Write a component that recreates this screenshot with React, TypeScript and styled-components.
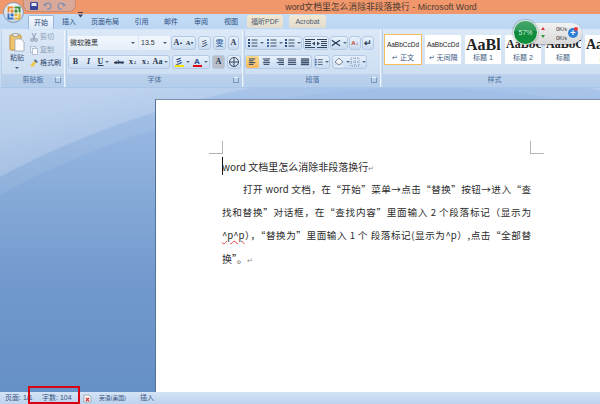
import React from "react";
import styled, { createGlobalStyle } from "styled-components";

const Global = createGlobalStyle`
  html, body { margin: 0; padding: 0; width: 600px; height: 404px; overflow: hidden; }
  body { font-family: "Liberation Sans", "Noto Sans CJK SC", sans-serif; }
  * { box-sizing: border-box; }
`;
const cjk = `"Liberation Sans", "Noto Sans CJK SC", sans-serif`;

const Window = styled.div`
  position: relative; width: 600px; height: 404px; display: flex; flex-direction: column; overflow: hidden;
  background: #6b94c9;
`;
const TitleBar = styled.div`
  height: 14px; background: #f1976c; display: flex; align-items: center; justify-content: center;
  padding-left: 162px; flex: none;
  font: 8.8px ${cjk}; color: #4c3a30; white-space: nowrap; line-height: 14px;
`;
const Tabs = styled.div`
  height: 15px; flex: none; background: linear-gradient(#c3dcf6, #bcd6f3); display: flex; padding-left: 28px; align-items: flex-end;
`;
const Tab = styled.div<{ $w: number; $active?: boolean }>`
  width: ${p => p.$w}px; height: 14px; font: 7px/14px ${cjk}; text-align: center; color: #2d4f80; flex: none;
  ${p => p.$active && `background: linear-gradient(#f6fafe, #dae8f7); color: #2a4a78; border: 1px solid #9db9dc; border-bottom: 0; border-radius: 2px 2px 0 0; line-height: 13px;`}
`;
const AddinTab = styled.div<{ $w: number; $ml: number }>`
  width: ${p => p.$w}px; margin-left: ${p => p.$ml}px; height: 13px; margin-bottom: 1px; flex: none; font: 7px/13px ${cjk}; text-align: center; color: #4a5a72;
  background: linear-gradient(#f3e9d3, #dfdcd0); border-radius: 2px 2px 0 0;
`;
const Ribbon = styled.div`
  height: 59px; flex: none; display: flex; gap: 1px; padding: 1px 0 0 1px;
  background: linear-gradient(#d7e6f7, #c6daf1);
  border-bottom: 1px solid #a9c6e8;
`;
const Group = styled.div<{ $w: number }>`
  width: ${p => p.$w}px; flex: none; display: flex; flex-direction: column; position: relative;
  background: linear-gradient(#dbe8f7, #cbdcf1); border-right: 1px solid #eef5fc; border-left: 1px solid #b9d0ea;
`;
const GroupBody = styled.div`
  flex: 1; display: flex; min-height: 0;
`;
const GroupLabel = styled.div`
  height: 13px; flex: none; background: linear-gradient(#bcd2ec, #b4cdea); font: 7px/12px ${cjk}; text-align: center; color: #4a6d9e; position: relative;
`;
const Launcher = styled.span`
  position: absolute; right: 3px; top: 3px; width: 6px; height: 6px; border: 1px solid #7d97b8; border-top-color: #eaf2fb; border-left-color: #7d97b8;
`;
const PasteCol = styled.div`
  width: 28px; flex: none; display: flex; flex-direction: column; align-items: center; padding: 3px 0 0 2px;
  font: 7px/9px ${cjk}; color: #2f4a72;
`;
const PasteLabel = styled.span`margin-top: 1px;`;
const Caret = styled.span`
  display: block; width: 0; height: 0; border: 2px solid transparent; border-top: 2.5px solid #3f5a80; border-bottom: 0; flex: none;
`;
const PasteCaret = styled(Caret)`margin-top: 5px;`;
const ClipCol = styled.div`
  flex: 1; display: flex; flex-direction: column; padding-top: 2px; gap: 3px;
`;
const ClipItem = styled.div<{ $off?: boolean }>`
  height: 10px; display: flex; align-items: center; gap: 2px; font: 7px/10px ${cjk}; color: ${p => p.$off ? "#8b9db3" : "#2f4a72"};
  white-space: nowrap;
`;
const FontRows = styled.div<{ $pl: number }>`
  flex: 1; display: flex; flex-direction: column; gap: 5px; padding: 6px 0 0 ${p => p.$pl}px;
`;
const ToolRow = styled.div<{ $gap?: number }>`
  display: flex; align-items: center; gap: ${p => p.$gap ?? 2}px; height: 14px;
`;
const Combo = styled.div<{ $w: number }>`
  width: ${p => p.$w}px; height: 14px; flex: none; background: linear-gradient(#f2f7fd, #e5eef9); display: flex; align-items: center; justify-content: space-between;
  padding: 0 3px 0 2px; font: 7px/14px ${cjk}; color: #333; margin-right: -1px;
`;
const ToolGroup = styled.div`
  display: flex; align-items: center; height: 14px; flex: none; border: 1px solid #b4cae4; border-radius: 3px;
  background: linear-gradient(#e8f1fb, #c9dbf1);
`;
const Tool = styled.div<{ $w?: number; $on?: boolean; $shade?: boolean }>`
  width: ${p => p.$w ?? 13}px; height: 12px; flex: none; display: flex; align-items: center; justify-content: center; gap: 1px;
  font: bold 8px/12px "Liberation Serif", serif; color: #27374f;
  ${p => p.$on && `background: linear-gradient(#fbd98f, #f6b95e); border-radius: 2px;`}
  ${p => p.$shade && `background: #b9bfc8;`}
`;
const SmallTool = styled(Tool)`font-size: 6.5px;`;
const GlyphTool = styled(Tool)<{ $blue?: boolean }>`
  font: 8px/12px "Noto Sans CJK SC", sans-serif; color: ${p => p.$blue ? "#2a5a9a" : "#27374f"};
`;
const ItalicTool = styled(Tool)`font-style: italic;`;
const SortTool = styled(Tool)`font: bold 6px/6px "Liberation Sans", sans-serif; color: #c0392b;`;
const MarkTool = styled(Tool)`font: bold 9px/12px "Liberation Sans", sans-serif;`;
const Tiny = styled.span`font-size: 4px;`;
const TextSwatch = styled.span<{ $c: string }>`
  display: inline-block; line-height: 8px; border-bottom: 2px solid ${p => p.$c}; font: bold 8px/7px "Liberation Sans", "Noto Sans CJK SC", sans-serif; color: #2a4a8a; width: 9px; text-align: center;
`;
const Gallery = styled.div`
  flex: 1; display: flex; gap: 4px; padding: 5px 0 0 2px; overflow: hidden;
`;
const StyleCard = styled.div<{ $sel?: boolean }>`
  width: 36px; height: 29px; flex: none; background: #fff; display: flex; flex-direction: column; align-items: center; overflow: hidden;
  ${p => p.$sel ? `outline: 1.5px solid #f5bd5c;` : ``}
`;
const Sample = styled.div<{ $size?: number }>`
  height: 18px; width: 100%; white-space: nowrap; overflow: hidden; text-align: ${p => p.$size ? "left" : "center"}; padding-left: ${p => p.$size ? 1 : 0}px;
  font: ${p => p.$size ? `bold ${p.$size}px/19px "Liberation Serif", serif` : `6.5px/19px "Liberation Sans", sans-serif`};
  color: #222;
`;
const StyleName = styled.div`
  height: 10px; font: 7px/9px ${cjk}; color: #3d5b85; white-space: nowrap;
`;
const Workspace = styled.div`
  flex: 1; min-height: 0; padding: 11px 0 0 155px; display: flex;
  background:
    radial-gradient(circle 930px at 420px 879px, rgba(255,255,255,0) 878px, rgba(255,255,255,.07) 880px, rgba(255,255,255,.07) 894px, rgba(255,255,255,.24) 896px, rgba(255,255,255,.3) 930px),
    linear-gradient(#a2c0e8, #8aadda 30%, #7199cd 65%, #6590c6);
`;
const Page = styled.div`
  flex: 1; background: #fff; position: relative; border-left: 1px solid #52729c; border-top: 1px solid #7e8ea6;
  padding: 55px 69px 0 66px; display: flex; flex-direction: column;
  font: 10px/23px "Noto Sans CJK SC", "Liberation Sans", sans-serif; color: #2b2b2b;
`;
const Mark = styled.span<{ $side: "l" | "r" }>`
  position: absolute; top: 41px; width: 14px; height: 13px; border-bottom: 1px solid #b5b5b5;
  ${p => p.$side === "l" ? `left: 53px; border-right: 1px solid #b5b5b5;` : `left: 374px; border-left: 1px solid #b5b5b5;`}
`;
const Cursor = styled.span`
  position: absolute; left: 66px; top: 57px; width: 1px; height: 18px; background: #111;
`;
const DocLine = styled.div<{ $indent?: boolean; $just?: boolean }>`
  height: 23px; white-space: nowrap; ${p => p.$indent && "padding-left: 21px;"}
  ${p => p.$just && "font-size: 9.6px; white-space: normal; text-align: justify; text-align-last: justify;"}
`;
const PMark = styled.span`
  color: #8a8a8a; font-size: 7px;
`;
const Wavy = styled.span`
  text-decoration: underline wavy #e04040 1px; text-underline-offset: 1px;
`;
const StatusBar = styled.div`
  height: 12px; flex: none; background: linear-gradient(#d5e4f6, #bdd3ee); display: flex; align-items: center; padding-left: 5px;
  font: 7px/12px ${cjk}; color: #39557e;
`;
const StatusItem = styled.span<{ $w: number; $small?: boolean }>`
  width: ${p => p.$w}px; flex: none; white-space: nowrap; display: flex; align-items: center;
  ${p => p.$small && "font-size: 5.8px;"}
`;
const RedBox = styled.div`
  position: absolute; left: 28px; top: 386px; width: 52px; height: 18px; border: 2px solid #d9000f;
`;
const Orb = styled.div`
  position: absolute; left: 3px; top: 2px; width: 21px; height: 21px; border-radius: 50%;
  background: radial-gradient(circle at 50% 30%, #fff, #cfdcec 70%, #8fa3bd);
  border: 1px solid #8b9cb2; display: flex; align-items: center; justify-content: center;
`;
const Qat = styled.div`
  position: absolute; left: 23px; top: 0; width: 53px; height: 12px; background: rgba(190,190,210,.45); border: 1px solid #c98a70; border-top: 0;
  border-radius: 0 0 7px 7px; display: flex; align-items: center; gap: 5px; padding-left: 6px;
`;
const QatMore = styled.div`
  position: absolute; left: 78px; top: 4px;
`;
const Meter = styled.div`
  position: absolute; left: 525px; top: 23px; width: 57px; height: 21px; border-radius: 11px; background: linear-gradient(#f2f2f2, #d9d9d9);
  box-shadow: 0 1px 2px rgba(0,0,0,.35); display: flex; flex-direction: column; align-items: flex-end; padding: 2px 15px 0 0;
  font: 5.5px/9px "Liberation Sans", sans-serif; color: #333;
`;
const MeterDial = styled.div`
  position: absolute; left: 513px; top: 20px; width: 25px; height: 25px; border-radius: 50%;
  background: linear-gradient(#46a86a 0, #2f9a5a 42%, #0f8a3a 45%, #12903e); border: 1px solid #d8e8dc;
  box-shadow: 0 0 2px rgba(0,0,0,.5);
  font: 7px/23px "Liberation Sans", sans-serif; color: #cfeedd; text-align: center;
`;
const MeterPlus = styled.div`
  position: absolute; left: 568px; top: 28px; width: 10px; height: 10px; border-radius: 50%; background: #2f7fd8; color: #fff;
  font: bold 9px/10px "Liberation Sans", sans-serif; text-align: center;
`;
const MeterDot = styled.div`
  position: absolute; left: 574px; top: 27px; width: 4px; height: 4px; border-radius: 50%; background: #e23b3b;
`;
const Arrow = styled.span<{ $c: string; $up?: boolean }>`
  position: absolute; left: 541px; top: ${p => p.$up ? 27 : 35}px; width: 0; height: 0;
  border: 2px solid transparent;
  ${p => p.$up ? `border-bottom: 3px solid ${p.$c}; border-top: 0;` : `border-top: 3px solid ${p.$c}; border-bottom: 0;`}
`;

const Lines = ({ kind }: { kind: "l" | "c" | "r" | "j" | "d" }) => {
  const rows: [number, number][] = kind === "l" ? [[1, 7], [1, 5], [1, 7], [1, 5]]
    : kind === "c" ? [[2, 8], [3, 6], [2, 8], [3, 6]]
    : kind === "r" ? [[3, 8], [5, 6], [3, 8], [5, 6]]
    : [[1, 9], [1, 9], [1, 9], [1, 9]];
  return (
    <svg width="10" height="9" viewBox="0 0 11 9">
      {rows.map(([x, w], i) => <rect key={i} x={x} y={i * 2} width={w} height={1.2} fill="#3c4f6b" />)}
      {kind === "d" && <rect x="1" y="0" width="9" height="8" fill="#3c4f6b" opacity=".35" />}
    </svg>
  );
};
const ListIcon = ({ n }: { n?: boolean }) => (
  <svg width="10" height="9" viewBox="0 0 10 9">
    {[1, 4, 7].map(y => <g key={y}><rect x="0" y={y - 1} width="2" height="2" fill={n ? "#3f6aa8" : "#2f4f80"} /><rect x="3.5" y={y - .5} width="6" height="1" fill="#3c4f6b" /></g>)}
  </svg>
);
const IndentIcon = ({ flip }: { flip?: boolean }) => (
  <svg width="10" height="9" viewBox="0 0 10 9">
    <g transform={flip ? "translate(10 0) scale(-1 1)" : undefined}>
      {[0, 2, 4, 6, 8].map(y => <rect key={y} x={y === 0 || y === 8 ? 0 : 4} y={y} width={y === 0 || y === 8 ? 10 : 6} height="1" fill="#33465f" />)}
      <path d="M0 2.5 L3 4.5 L0 6.5Z" fill="#33465f" />
    </g>
  </svg>
);
const Mini = styled(Caret)`margin-left: 1px; border-top-color: #55708f;`;

export default function App() {
  return (
    <Window>
      <Global />
      <TitleBar>word文档里怎么消除非段落换行 - Microsoft Word</TitleBar>
      <Tabs>
        <Tab $w={26} $active>开始</Tab>
        <Tab $w={30}>插入</Tab>
        <Tab $w={42}>页面布局</Tab>
        <Tab $w={31}>引用</Tab>
        <Tab $w={28}>邮件</Tab>
        <Tab $w={32}>审阅</Tab>
        <Tab $w={28}>视图</Tab>
        <AddinTab $w={36} $ml={2}>福昕PDF</AddinTab>
        <AddinTab $w={37} $ml={6}>Acrobat</AddinTab>
      </Tabs>
      <Ribbon>
        <Group $w={64}>
          <GroupBody>
            <PasteCol>
              <svg width="16" height="19" viewBox="0 0 16 19">
                <rect x="1" y="2" width="11" height="15" rx="1" fill="#f0c46a" stroke="#b98f3e" />
                <rect x="4" y="0.5" width="5" height="3" fill="#e8e8e8" stroke="#8a8a8a" strokeWidth=".6" />
                <path d="M6 6h6l3 3v9H6z" fill="#fdfdfd" stroke="#97a5b5" strokeWidth=".8" />
              </svg>
              <PasteLabel>粘贴</PasteLabel>
              <PasteCaret />
            </PasteCol>
            <ClipCol>
              <ClipItem $off>
                <svg width="8" height="9" viewBox="0 0 8 9"><path d="M2 0l3 6M6 0L3 6" stroke="#8b9db3" fill="none" /><circle cx="2" cy="7" r="1.4" fill="none" stroke="#8b9db3" /><circle cx="6" cy="7" r="1.4" fill="none" stroke="#8b9db3" /></svg>
                剪切
              </ClipItem>
              <ClipItem $off>
                <svg width="8" height="9" viewBox="0 0 8 9"><rect x="0.5" y="0.5" width="5" height="6" fill="#eef3f9" stroke="#9fb0c4" strokeWidth=".7" /><rect x="2.5" y="2.5" width="5" height="6" fill="#f8fafc" stroke="#9fb0c4" strokeWidth=".7" /></svg>
                复制
              </ClipItem>
              <ClipItem>
                <svg width="8" height="9" viewBox="0 0 8 9"><path d="M5 0l3 3-2 1-2-2z" fill="#5a6c88" /><path d="M4 2l2 2-3 4-3-1z" fill="#f0c84a" /></svg>
                格式刷
              </ClipItem>
            </ClipCol>
          </GroupBody>
          <GroupLabel>剪贴板<Launcher /></GroupLabel>
        </Group>
        <Group $w={177}>
          <GroupBody>
            <FontRows $pl={1}>
              <ToolRow>
                <Combo $w={70}>微软雅黑<Caret /></Combo>
                <Combo $w={31}>13.5<Caret /></Combo>
                <ToolGroup>
                  <Tool $w={12}>A<Tiny>▴</Tiny></Tool>
                  <SmallTool $w={11}>A<Tiny>▾</Tiny></SmallTool>
                </ToolGroup>
                <ToolGroup><GlyphTool $w={11}>彡</GlyphTool></ToolGroup>
                <ToolGroup><GlyphTool $w={11} $blue>雯</GlyphTool></ToolGroup>
                <ToolGroup><Tool $w={9}>A</Tool></ToolGroup>
              </ToolRow>
              <ToolRow>
                <ToolGroup>
                  <Tool>B</Tool>
                  <ItalicTool>I</ItalicTool>
                  <Tool $w={17}><u>U</u><Mini /></Tool>
                  <SmallTool $w={14}><s>abc</s></SmallTool>
                  <Tool>x<sub><Tiny>2</Tiny></sub></Tool>
                  <Tool>x<sup><Tiny>2</Tiny></sup></Tool>
                  <Tool $w={17}>Aa<Mini /></Tool>
                </ToolGroup>
                <ToolGroup>
                  <Tool $w={18}><TextSwatch $c="#f5e400">彡</TextSwatch><Mini /></Tool>
                  <Tool $w={18}><TextSwatch $c="#e0000f">A</TextSwatch><Mini /></Tool>
                </ToolGroup>
                <ToolGroup><Tool $w={11} $shade>A</Tool></ToolGroup>
                <ToolGroup>
                  <svg width="12" height="12" viewBox="0 0 12 12"><circle cx="6" cy="6" r="4.5" fill="none" stroke="#33465f" /><path d="M6 2v8M2 6h8" stroke="#33465f" /></svg>
                </ToolGroup>
              </ToolRow>
            </FontRows>
          </GroupBody>
          <GroupLabel>字体<Launcher /></GroupLabel>
        </Group>
        <Group $w={137}>
          <GroupBody>
            <FontRows $pl={0}>
              <ToolRow $gap={1}>
                <ToolGroup>
                  <Tool $w={19}><ListIcon /><Mini /></Tool>
                  <Tool $w={20}><ListIcon n /><Mini /></Tool>
                  <Tool $w={16}><ListIcon /><Mini /></Tool>
                </ToolGroup>
                <ToolGroup>
                  <Tool $w={12}><IndentIcon flip /></Tool>
                  <Tool $w={12}><IndentIcon /></Tool>
                </ToolGroup>
                <ToolGroup>
                  <Tool $w={16}>
                    <svg width="11" height="8" viewBox="0 0 11 8"><path d="M1 1l4 3 5-3M1 7l4-3 5 3" stroke="#22365a" strokeWidth="1.2" fill="none" /></svg>
                    <Mini />
                  </Tool>
                </ToolGroup>
                <ToolGroup><SortTool $w={10}>A↓</SortTool></ToolGroup>
                <ToolGroup><MarkTool $w={10}>↵</MarkTool></ToolGroup>
              </ToolRow>
              <ToolRow $gap={2}>
                <ToolGroup>
                  <Tool $on><Lines kind="l" /></Tool>
                  <Tool><Lines kind="c" /></Tool>
                  <Tool><Lines kind="r" /></Tool>
                  <Tool><Lines kind="j" /></Tool>
                  <Tool><Lines kind="d" /></Tool>
                </ToolGroup>
                <ToolGroup><Tool $w={14}><ListIcon n /><Mini /></Tool></ToolGroup>
                <ToolGroup>
                  <Tool $w={17}>
                    <svg width="10" height="10" viewBox="0 0 10 10"><path d="M5 1l4 4-4 3-4-3z" fill="#f5f5f5" stroke="#5a6c88" strokeWidth=".8" /><rect x="0" y="8.5" width="10" height="1.5" fill="#e8eef8" /></svg>
                    <Mini />
                  </Tool>
                  <Tool $w={16}>
                    <svg width="10" height="10" viewBox="0 0 10 10"><rect x="1" y="1" width="8" height="8" fill="none" stroke="#7f93ad" strokeDasharray="1 1" /><path d="M1 5h8M5 1v8" stroke="#7f93ad" strokeDasharray="1 1" /></svg>
                    <Mini />
                  </Tool>
                </ToolGroup>
              </ToolRow>
            </FontRows>
          </GroupBody>
          <GroupLabel>段落<Launcher /></GroupLabel>
        </Group>
        <Group $w={225}>
          <GroupBody>
            <Gallery>
              <StyleCard $sel><Sample>AaBbCcDd</Sample><StyleName>↵ 正文</StyleName></StyleCard>
              <StyleCard><Sample>AaBbCcDd</Sample><StyleName>↵ 无间隔</StyleName></StyleCard>
              <StyleCard><Sample $size={16}>AaBl</Sample><StyleName>标题 1</StyleName></StyleCard>
              <StyleCard><Sample $size={12}>AaBbC</Sample><StyleName>标题 2</StyleName></StyleCard>
              <StyleCard><Sample $size={12}>AaBbC</Sample><StyleName>标题</StyleName></StyleCard>
              <StyleCard><Sample $size={14}>Aa</Sample><StyleName>副</StyleName></StyleCard>
            </Gallery>
          </GroupBody>
          <GroupLabel>样式</GroupLabel>
        </Group>
      </Ribbon>
      <Workspace>
        <Page>
          <Mark $side="l" />
          <Mark $side="r" />
          <Cursor />
          <DocLine>word 文档里怎么消除非段落换行<PMark>↵</PMark></DocLine>
          <DocLine $indent $just>打开 word 文档，在“开始”菜单→点击“替换”按钮→进入“查</DocLine>
          <DocLine $just>找和替换”对话框，在“查找内容”里面输入 2 个段落标记（显示为</DocLine>
          <DocLine $just><Wavy>^p^p</Wavy>），“替换为”里面输入 1 个 段落标记(显示为^p）,点击“全部替</DocLine>
          <DocLine>换”。<PMark>↵</PMark></DocLine>
        </Page>
      </Workspace>
      <StatusBar>
        <StatusItem $w={37}>页面: 1/1</StatusItem>
        <StatusItem $w={41}>字数: 104</StatusItem>
        <StatusItem $w={16}>
          <svg width="9" height="9" viewBox="0 0 9 9"><path d="M1 1h5l2 2v5H1z" fill="#f4f4f4" stroke="#8a8a8a" strokeWidth=".6" /><path d="M3 4l3 3M6 4L3 7" stroke="#d9342b" strokeWidth="1.2" /></svg>
        </StatusItem>
        <StatusItem $w={41} $small>英语(美国)</StatusItem>
        <StatusItem $w={20}>插入</StatusItem>
      </StatusBar>
      <RedBox />
      <Qat>
        <svg width="8" height="8" viewBox="0 0 8 8"><rect width="8" height="8" rx="1" fill="#37479a" /><rect x="1.5" y="1" width="5" height="3" fill="#e8ecf8" /></svg>
        <svg width="9" height="8" viewBox="0 0 9 8"><path d="M2 4a3 3 0 1 1 2 3" fill="none" stroke="#7f8fb0" strokeWidth="1.3" /><path d="M0 3l3-2v4z" fill="#7f8fb0" /></svg>
        <svg width="9" height="8" viewBox="0 0 9 8"><path d="M7 4a3 3 0 1 0-2 3" fill="none" stroke="#7f8fb0" strokeWidth="1.3" /><path d="M9 3L6 1v4z" fill="#7f8fb0" /></svg>
      </Qat>
      <QatMore>
        <svg width="5" height="6" viewBox="0 0 5 6"><rect width="5" height="1" fill="#3a3a5a" /><path d="M0 2.5h5L2.5 5.5z" fill="#3a3a5a" /></svg>
      </QatMore>
      <Orb>
        <svg width="14" height="14" viewBox="0 0 14 14">
          <rect x="0.5" y="0.5" width="6" height="6" fill="#e8862a" />
          <rect x="7.5" y="0.5" width="6" height="6" fill="#3f8f3f" />
          <rect x="0.5" y="7.5" width="6" height="6" fill="#3a6fc0" />
          <rect x="7.5" y="7.5" width="6" height="6" fill="#e2b431" />
          <rect x="3" y="3" width="8" height="8" fill="none" stroke="#fff" strokeWidth="1" />
        </svg>
      </Orb>
      <Meter><span>0K/s</span><span>0K/s</span></Meter>
      <Arrow $c="#d33" $up />
      <Arrow $c="#2a9a3a" />
      <MeterDial>57%</MeterDial>
      <MeterPlus>+</MeterPlus>
      <MeterDot />
    </Window>
  );
}
